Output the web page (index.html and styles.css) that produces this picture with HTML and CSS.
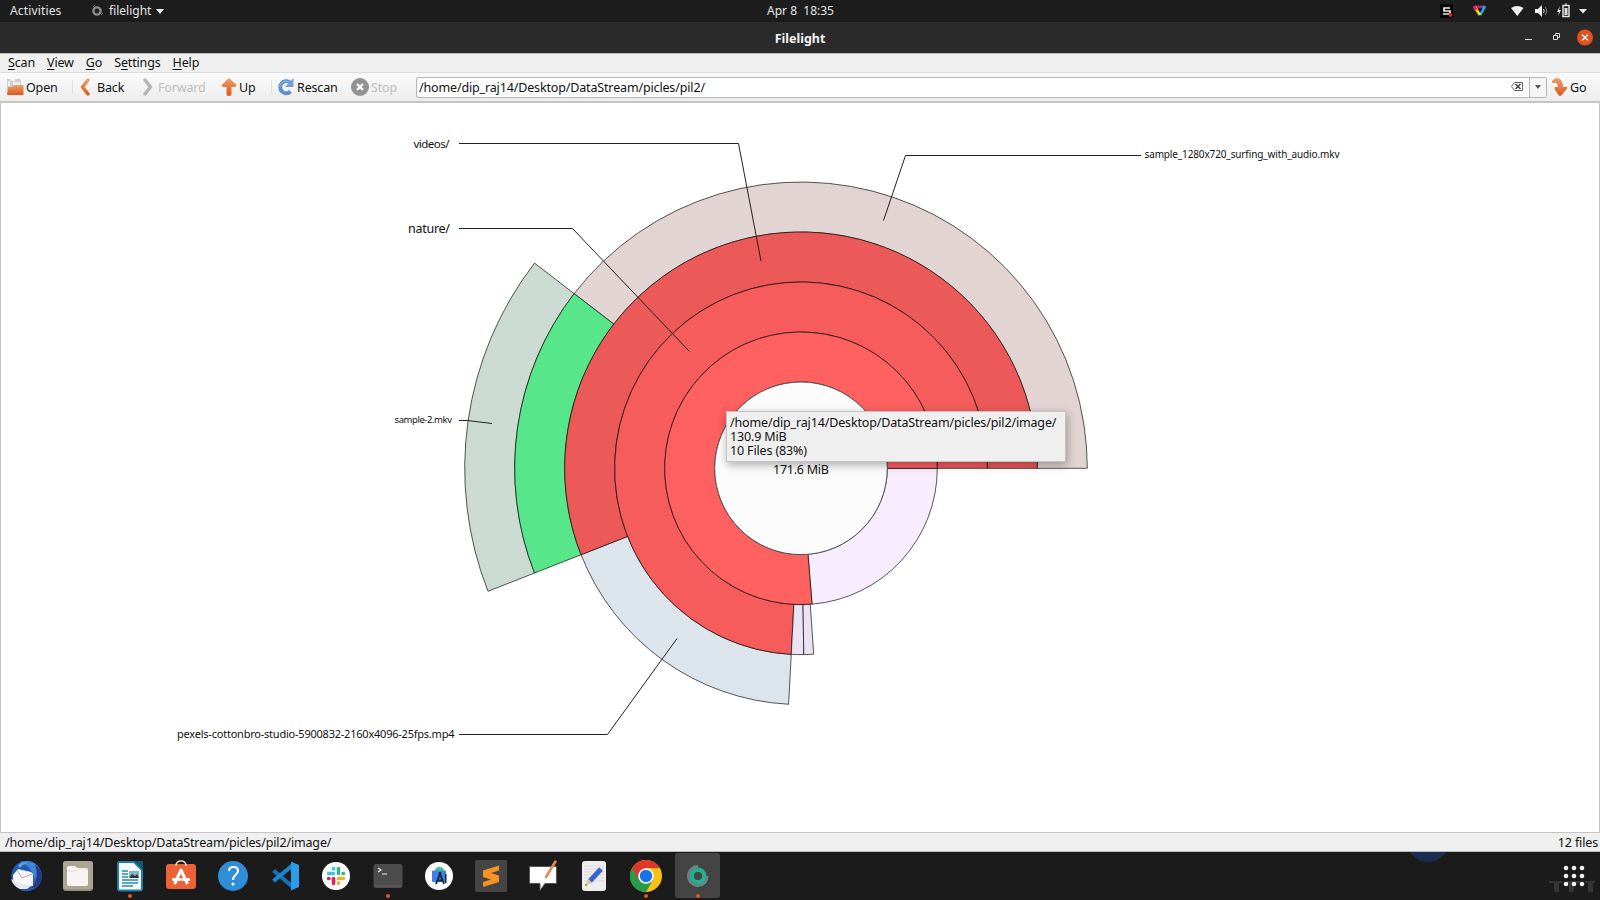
FILE: index.html
```html
<!DOCTYPE html>
<html lang="en"><head><meta charset="utf-8"><title>Filelight</title><link rel="stylesheet" href="styles.css"></head>
<body>
<header class="panel">
  <span class="activities">Activities</span>
  <svg class="app-ico" width="12" height="12" viewBox="0 0 12 12"><circle cx="6" cy="6" r="3.6" fill="none" stroke="#8b8b8b" stroke-width="2.4"/><path d="M2 2l2-2M10 10l2-2" stroke="#666"/></svg>
  <span class="app-name">filelight</span>
  <svg class="app-arrow" width="8" height="5"><path d="M0 0h8L4 5z" fill="#eee"/></svg>
  <span class="clock">Apr 8&nbsp; 18:35</span>
  <svg class="tray" width="170" height="22" viewBox="0 0 170 22">
    <rect x="10" y="4" width="13" height="14" fill="#000"/><path d="M20 8h-6v3h6v3h-7" fill="none" stroke="#eee" stroke-width="1.7"/><circle cx="20.500" cy="15" r="2" fill="#d8232f"/>
    <path d="M45 7h9" stroke="#b0208c" stroke-width="3"/><path d="M55 6l-5 9" stroke="#20a8d8" stroke-width="3"/><path d="M45 7l5 8" stroke="#f2d820" stroke-width="3"/><path d="M44 6l2 4" stroke="#e02850" stroke-width="3"/><path d="M47.500 8.500h5l-2.500 4z" fill="#1c1c1c"/>
    <path d="M81 8q6-4 12.500 0l-6.200 8z" fill="#f2f2f2"/>
    <path d="M105 9h3l4-4v12l-4-4h-3z" fill="#f2f2f2"/><path d="M113.500 9q1.500 2 0 4" fill="none" stroke="#ddd"/><path d="M115 7q3.500 4 0 8" fill="none" stroke="#888"/>
    <path d="M130 6l-3 6h2l-1 4 3-6h-2z" fill="#eee"/><rect x="133" y="5.500" width="6" height="11" fill="none" stroke="#eee" stroke-width="1.400"/><path d="M135 4h2" stroke="#eee"/><rect x="134.500" y="8" width="3" height="7" fill="#ddd"/>
    <path d="M149 9h8l-4 4.500z" fill="#eee"/>
  </svg>
</header>
<div class="titlebar"><b>Filelight</b>
  <svg class="winctl" width="80" height="30" viewBox="0 0 80 30"><path d="M5 17.500h7" stroke="#ddd"/><path d="M33.500 13.500h4v4h-4zM35.500 13v-1.500h4v4h-1.500" fill="none" stroke="#ddd"/><circle cx="65" cy="15.500" r="8" fill="#e2511f"/><path d="M62 12.500l6 6m0-6l-6 6" stroke="#fff" stroke-width="1.200"/></svg>
</div>
<nav class="menu"><span><u>S</u>can</span><span><u>V</u>iew</span><span><u>G</u>o</span><span>S<u>e</u>ttings</span><span><u>H</u>elp</span></nav>
<div class="toolbar">
  <div class="tool open"><svg width="18" height="18" viewBox="0 0 18 18"><path d="M1 1h3l2 2h3V1h5l1 1v9H1z" fill="#cfcfcf"/><path d="M2 3h2v5H2zM7 4h7v3H7z" fill="#eee"/><path d="M2 9q5 0 7-2h8.500v9q0 1-1 1H2q-1 0-1-1z" fill="url(#og)"/></svg><span>Open</span></div>
  <i class="sep"></i>
  <div class="tool back"><svg width="10" height="18"><path d="M8 2L2.500 9 8 16" fill="none" stroke="url(#og)" stroke-width="3.400" stroke-linecap="round" stroke-linejoin="round"/></svg><span>Back</span></div>
  <div class="tool fwd off"><svg width="10" height="18"><path d="M2 2l5.500 7L2 16" fill="none" stroke="#b4b4b4" stroke-width="3.400" stroke-linecap="round" stroke-linejoin="round"/></svg><span>Forward</span></div>
  <div class="tool up"><svg width="16" height="20"><path d="M8 1l7.500 7q0 2-2 2H10.500v7q0 2-2.500 2t-2.500-2v-7H2.500Q.5 10 .5 8z" fill="url(#og)"/></svg><span>Up</span></div>
  <i class="sep"></i>
  <div class="tool rescan"><svg width="18" height="18" viewBox="0 0 18 18"><path d="M13.500 13.500A6 6 0 1 1 13 4.500" fill="none" stroke="#5d91cb" stroke-width="4"/><path d="M16.500 0v9H8z" fill="#6ea2d9"/><path d="M3 9a6 6 0 0 1 9-5" fill="none" stroke="#9bc2ec" stroke-width="1"/></svg><span>Rescan</span></div>
  <div class="tool stop off"><svg width="18" height="18"><circle cx="9" cy="9" r="9" fill="#929292"/><path d="M6 6l6 6m0-6l-6 6" stroke="#fff" stroke-width="2.200"/></svg><span>Stop</span></div>
  <div class="address"><span>/home/dip_raj14/Desktop/DataStream/picles/pil2/</span>
    <svg width="12" height="10" viewBox="0 0 12 10"><path d="M3.500.5h8v8h-8L.5 4.500z" fill="none" stroke="#666"/><path d="M4.500 2l5 5m0-5l-5 5" stroke="#444" stroke-width="1.500"/></svg>
    <i class="drop"></i></div>
  <div class="tool go"><svg width="17" height="18" viewBox="0 0 17 18"><path d="M1 3Q4-1 8 .5q4 2 4 8.500h4q1 1-1 3l-5 5.500q-1 .8-2 0L4 12q-1-2 0-3h3q0-5-6-4z" fill="url(#og)"/></svg><span>Go</span></div>
</div>
<main class="map">
<svg class="chart" width="1600" height="730" viewBox="0 102 1600 730">
  <defs><linearGradient id="og" x1="0" y1="0" x2="0" y2="1"><stop offset="0" stop-color="#e9a468"/><stop offset="1" stop-color="#e2521d"/></linearGradient></defs>
  <g id="rings" class="rings"></g>
  <g class="leaders"><path d="M459 143.500H738.500L761 261M459 228.500H572.500L689.500 351.500M459 420.500H467L492 423.500M459 734.500H607.500L677 638.500M1141 155.500H905.500L883.500 220.500"/></g>
  <g class="labels">
    <text x="413.500" y="147.500" font-size="11.500" textLength="36">videos/</text>
    <text x="408" y="232.500" font-size="12.500" textLength="42">nature/</text>
    <text x="394.500" y="423.300" font-size="9.500" textLength="57.500">sample-2.mkv</text>
    <text x="177" y="738" font-size="11" textLength="277.500">pexels-cottonbro-studio-5900832-2160x4096-25fps.mp4</text>
    <text x="1144.500" y="158" font-size="10" textLength="195">sample_1280x720_surfing_with_audio.mkv</text>
    <text x="773" y="473.500" font-size="12.500" textLength="56" fill="#333">171.6 MiB</text>
  </g>
</svg>
<div class="tip"><span>/home/dip_raj14/Desktop/DataStream/picles/pil2/image/</span><span>130.9 MiB</span><span>10 Files (83%)</span></div>
</main>
<footer class="status"><span class="path">/home/dip_raj14/Desktop/DataStream/picles/pil2/image/</span><span>12 files</span></footer>
<div class="dock">
 <div class="item"><svg viewBox="0 0 32 32"><circle cx="16.500" cy="16" r="15.300" fill="#2258ad"/><path d="M10 2q14-4 20 8 3 13-8 19 5-9 1-15Q19 5 10 2z" fill="#3e86d6"/><path d="M25 5q5 12-4 24 9-3 10.500-12Q32 9 25 5z" fill="#27358a"/><path d="M8 5q5-4 10-2-5 1-8 5z" fill="#5fa5e8"/><path d="M3 15L8 9l13 3 2 2v12l-12 1-8-6z" fill="#f6f6f6"/><path d="M7 10l5 8 10-4" fill="none" stroke="#aaa"/><path d="M1 19l10 5 11 1-5 4H10Q3 26 1 19z" fill="#e9e9ee"/></svg></div>
 <div class="item"><svg viewBox="0 0 32 32"><rect x="1" y="1" width="30" height="30" rx="3" fill="#8f8978"/><rect x="1" y="1" width="30" height="28.500" rx="3" fill="#aba594"/><path d="M5 8q0-2 2-2h6l2 2h9q2 0 2 2v14q0 2-2 2H7q-2 0-2-2z" fill="#f7f5f2"/><path d="M5 11h10l2-2h9" fill="none" stroke="#ddd"/></svg></div>
 <div class="item run"><svg viewBox="0 0 32 32"><path d="M5 2h15l8 8v19q0 1.500-2 1.500H6q-2 0-2-1.500V3z" fill="#f7fbfd" stroke="#1f7fa9" stroke-width="2"/><path d="M20 1h9v9z" fill="#12577c"/><path d="M8 11h6M8 14h6M8 17h6M8 20h16M8 23h16M8 26h11" stroke="#268bb6" stroke-width="1.500"/><rect x="15" y="11" width="10" height="7" fill="#79b8d8"/><path d="M15 18l3-4 3 2 2-2 2 4z" fill="#333"/></svg></div>
 <div class="item"><svg viewBox="0 0 32 32"><rect x="1" y="4" width="30" height="25" rx="3" fill="#ea6236"/><path d="M11 6q0-5 5-5t5 5" fill="none" stroke="#ead4b8" stroke-width="1.500"/><path d="M9.500 24L16 10l6.500 14" fill="none" stroke="#fff" stroke-width="3" stroke-linejoin="round"/><path d="M7 19.500h18" stroke="#fff" stroke-width="2.600"/></svg></div>
 <div class="item"><svg viewBox="0 0 32 32"><circle cx="16" cy="16" r="15" fill="#2f8ed8"/><path d="M12 11q0-4 4.500-4t4.500 4q0 2-2.500 4T16 20" fill="none" stroke="#fff" stroke-width="2.200"/><circle cx="16" cy="24" r="1.500" fill="#fff"/></svg></div>
 <div class="item"><svg viewBox="0 0 32 32"><path d="M4.500 10.500L24 27" stroke="#1273ba" stroke-width="4.200"/><path d="M4.500 21L24 5" stroke="#1a86cf" stroke-width="4.200"/><path d="M22 1.500l8 3.500v22l-8 3.500z" fill="#2a9ce8"/></svg></div>
 <div class="item"><svg viewBox="0 0 32 32"><circle cx="16" cy="16" r="14" fill="#fff"/><g stroke-width="3.500" stroke-linecap="round"><path d="M13.500 8.500v.5M8.500 13.500h5" stroke="#36c5f0"/><path d="M18.500 8.500v5M23 13.500h.5" stroke="#2eb67d"/><path d="M18.500 18.500h5M18.500 23v.5" stroke="#ecb22e"/><path d="M13.500 18.500v5M8.500 18.500h.5" stroke="#e01e5a"/></g></svg></div>
 <div class="item run"><svg viewBox="0 0 32 32"><rect x="1.500" y="4" width="29" height="24" rx="2.500" fill="#4c4c4c"/><path d="M2 26h28" stroke="#626262"/><path d="M6 8l3 2-3 2M10 14h5" fill="none" stroke="#eee" stroke-width="1.200"/></svg></div>
 <div class="item"><svg viewBox="0 0 32 32"><circle cx="16" cy="16" r="14" fill="#fff"/><path d="M12 11q0-4 4.500-4t4.500 4z" fill="#43c984"/><rect x="9" y="10.500" width="14" height="11.500" rx="1" fill="#3f80e8"/><path d="M13 24l4-10 4 10M14.500 20.500h5" fill="none" stroke="#102936" stroke-width="1.800"/><path d="M22 14h1.500v9H22z" fill="#102936"/><path d="M17 12v3" stroke="#102936" stroke-width="2.500"/></svg></div>
 <div class="item"><svg viewBox="0 0 32 32"><rect width="32" height="32" rx="2" fill="#454545"/><path d="M24 5.500L8 10.500v6.500l8 2.500-8 2.500v5l16-5v-6.500L16 13l8-2.500z" fill="#f79421"/></svg></div>
 <div class="item"><svg viewBox="0 0 32 32"><path d="M2.500 6.500h27v17H18l-5 7v-7H2.500z" fill="#fff" stroke="#555"/><path d="M28.500 1.500L19 17" stroke="#e78756" stroke-width="2.600" stroke-linecap="round"/></svg></div>
 <div class="item"><svg viewBox="0 0 32 32"><rect x="4" y="1" width="24" height="30" rx="3" fill="#eee"/><path d="M6 6h20M6 9h20M6 12h20M6 15h20M6 18h20M6 21h20" stroke="#d9d9d9"/><path d="M23 9L12 21" stroke="#3564d4" stroke-width="5"/><path d="M10 19l4 4-7 3z" fill="#e8c48f"/><path d="M8 24l-1 2 2-1z" fill="#333"/></svg></div>
 <div class="item run"><svg viewBox="0 0 32 32"><circle cx="16" cy="16" r="16" fill="#fbc116"/><path d="M2.140 8A16 16 0 0 0 16 32l6.900-12L16 16z" fill="#269b49"/><path d="M2.140 8L9 20l7-12h13.860A16 16 0 0 0 2.140 8z" fill="#df3729"/><circle cx="16" cy="16" r="7.800" fill="#fff"/><circle cx="16" cy="16" r="6.200" fill="#1b72e8"/></svg></div>
 <div class="item run active"><svg viewBox="0 0 32 32"><path d="M17 27.500a11 11 0 0 0 11-10" fill="none" stroke="#29343a" stroke-width="3"/><path d="M16 5A11 11 0 1 0 24 23.500" fill="none" stroke="#6f8288" stroke-width="3"/><path d="M26.500 16a10 10 0 0 1-3 8" fill="none" stroke="#6f8288" stroke-width="3"/><circle cx="16" cy="16" r="7.200" fill="none" stroke="#26ae91" stroke-width="5"/></svg></div>
 <i class="moon"></i>
 <div class="apps"><svg width="50" height="40" viewBox="0 0 50 40"><g fill="#353535"><path d="M0 21h13v2H0zM5 22h5v10H5zM18 21h13v2H18zM20 22h5v10h-5zM36 21h10v2H36zM39 22h5v10h-5z"/></g><g fill="#f2f2f2"><circle cx="17" cy="8" r="2.300"/><circle cx="25" cy="8" r="2.300"/><circle cx="33" cy="8" r="2.300"/><circle cx="17" cy="16" r="2.300"/><circle cx="25" cy="16" r="2.300"/><circle cx="33" cy="16" r="2.300"/><circle cx="17" cy="24" r="2.300"/><circle cx="25" cy="24" r="2.300"/><circle cx="33" cy="24" r="2.300"/></g></svg></div>
</div>
<script src="chart.js"></script>
</body></html>
```
FILE: styles.css
```css
*{box-sizing:border-box}
body{margin:0;width:1600px;height:900px;overflow:hidden;display:flex;flex-direction:column;background:#efefef;color:#111;font:12.5px/16px "Noto Sans","Open Sans",sans-serif;letter-spacing:-.15px}
svg{display:block;flex:none}
.panel{height:22px;flex:none;background:#1d1d1d;color:#e4e4e4;display:flex;align-items:center;padding:0 4px 0 10px;font-size:12px;letter-spacing:.15px;position:relative}
.app-ico{margin-left:29px}.app-name{margin-left:6px;letter-spacing:0}.app-arrow{margin-left:5px}
.activities{width:52px;white-space:nowrap}
.clock{position:absolute;left:1px;right:0;text-align:center;font-size:12px;letter-spacing:0}
.tray{margin-left:auto;margin-right:-4px}
.titlebar{height:31px;flex:none;background:#2b2b2b;color:#f4f4f4;display:flex;align-items:center;justify-content:center;position:relative;font-size:12.5px;padding-top:2px;letter-spacing:0}
.winctl{position:absolute;right:0;top:0}
.menu{height:19px;flex:none;display:flex;align-items:center;padding-left:8px;gap:12px;border-top:1px solid #bbb}
.menu u{text-underline-offset:2px}
.toolbar{height:30px;flex:none;display:flex;align-items:center;background:linear-gradient(#fafafa,#ededed);border-top:1px solid #ddd;border-bottom:1px solid #c4c4c4;padding-left:6px}
.tool{display:flex;align-items:center;flex:none}
.tool span,.address span{padding-top:1px}
.off{color:#bdbdbd}
.sep{width:1px;height:14px;background:#e2e2e2;flex:none}
.open{width:66px;gap:2px}.back{width:63px;gap:7px;margin-left:7px}.fwd{width:78px;gap:5px}.up{width:50px;gap:2px}
.rescan{width:74px;gap:2px;margin-left:5px}.stop{width:65px;gap:2px}
.address{width:1131px;height:21px;background:#fff;border:1px solid #b5b5b5;border-radius:2px;display:flex;align-items:center;padding-left:2px;flex:none}
.address svg{margin-left:auto;margin-right:6px}
.drop{width:17px;height:19px;border-left:1px solid #b5b5b5;background:#f5f5f5;display:grid;place-items:center}
.drop::after{content:"";border:3px solid transparent;border-top:4px solid #555;margin-top:3px}
.go{margin-left:4px;gap:2px}
.map{height:731px;flex:none;background:#fff;position:relative;border:1px solid #c4c4c4}
.chart{margin:-1px}
.rings path{stroke:#000;stroke-opacity:.65;stroke-width:1}
.leaders path{fill:none;stroke:#222;stroke-width:1}
.labels text{fill:#111;letter-spacing:0}
.tip{position:absolute;left:725px;top:308px;width:340px;height:51px;background:#efefef;border:1px solid #c3c3c3;box-shadow:1px 3px 9px rgba(0,0,0,.32);display:flex;flex-direction:column;padding:4px 3px;line-height:14px}
.status{height:19px;flex:none;display:flex;justify-content:space-between;align-items:center;padding:2px 2px 0 5px;border-bottom:1px solid #bbb}
.dock{height:48px;flex:none;background:#1b1b1b;display:flex;position:relative;overflow:hidden}
.item{width:51.65px;flex:none;display:grid;place-items:center;position:relative;left:.5px}
.item svg{width:32px;height:32px}
.run::after{content:"";position:absolute;left:24px;bottom:2px;width:4px;height:4px;border-radius:50%;background:#e95420}
.active::before{content:"";position:absolute;left:3px;top:1px;width:45px;height:45px;border-radius:3px;background:#444}
.active svg{position:relative;width:28px;height:28px}
.moon{position:absolute;left:1407px;top:-32px;width:42px;height:42px;border-radius:50%;background:#1b2d50}
.apps{margin-left:auto;width:51px;padding-top:8px}
```
FILE: chart.js
```js
const CX = 801, CY = 468.3;
const R = [86.3, 136.3, 186.3, 236.3, 286.3, 336.3];
// Angles in degrees, counter-clockwise from east.
const segments = [
  [4, 142.4, 201.45, '#ccdbd1'],
  [3, 0, 142.4, '#e1d4d2'],
  [3, 142.4, 201.45, '#57e68a'],
  [2, 201.45, 267, '#dde5ec'],
  [2, 0, 201.45, '#ec5959'],
  [1, 0, 267, '#f65c5c'],
  [1, 267, 270.85, '#ebe2f4'],
  [1, 270.85, 273.9, '#ebe2f4'],
  [0, 274.65, 360, '#f8ecff'],
  [0, 0, 274.65, '#ff6060']
];
const pt = (r, deg) => {
  const a = deg * Math.PI / 180;
  return (CX + r * Math.cos(a)).toFixed(2) + ' ' + (CY - r * Math.sin(a)).toFixed(2);
};
let out = '';
for (const [ring, a, b, fill] of segments) {
  const r = R[ring], q = R[ring + 1], big = b - a > 180 ? 1 : 0;
  out += `<path fill="${fill}" d="M${pt(r, a)}L${pt(q, a)}A${q} ${q} 0 ${big} 0 ${pt(q, b)}L${pt(r, b)}A${r} ${r} 0 ${big} 1 ${pt(r, a)}Z"/>`;
}
out += `<circle cx="${CX}" cy="${CY}" r="${R[0]}" fill="#fcfcfc" stroke="#555"/>`;
document.getElementById('rings').innerHTML = out;
```
